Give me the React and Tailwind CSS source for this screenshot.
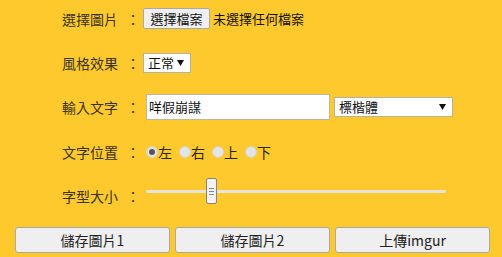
function Label({ children, className = "" }) {
  return (
    <span className={"w-[81px] shrink-0 text-[14px] leading-[20px] text-[#3a3325] whitespace-nowrap " + className}>
      {children}
      <span className="ml-[8px]">：</span>
    </span>
  );
}

function Arrow() {
  return (
    <svg width="7" height="6" viewBox="0 0 7 6" className="shrink-0">
      <path d="M0 0 H7 L3.5 6 Z" fill="#111" />
    </svg>
  );
}

function Radio({ checked, label }) {
  return (
    <label className="flex items-center mr-[7px]">
      <span className="w-[12px] h-[12px] rounded-full border border-[#d8d2c0] bg-[#e4e4e4] flex items-center justify-center">
        {checked && <span className="w-[6px] h-[6px] rounded-full bg-[#555]" />}
      </span>
      <span className="text-[14px] leading-[16px] text-[#2a2418]">{label}</span>
    </label>
  );
}

export default function App() {
  const btn =
    "w-[155px] h-[26px] shrink-0 rounded-[3px] border border-[#a9a9a9] bg-[#efefef] text-[14px] leading-[20px] text-[#222] flex items-center justify-center";

  return (
    <div
      className="w-[502px] h-[257px] bg-[#fec92c] overflow-hidden"
      style={{ fontFamily: '"Noto Sans CJK TC", "Noto Sans", sans-serif' }}
    >
      <div className="pl-[62px]">
        {/* 選擇圖片 */}
        <div className="flex items-center h-[21px] mt-[8px]">
          <Label>選擇圖片</Label>
          <button className="h-[21px] w-[67px] rounded-[2px] border border-[#a8a8a8] bg-[#efefef] text-[13px] text-[#111] flex items-center justify-center">
            選擇檔案
          </button>
          <span className="ml-[3px] text-[13px] text-[#111]">未選擇任何檔案</span>
        </div>

        {/* 風格效果 */}
        <div className="flex items-center h-[20px] mt-[24px]">
          <Label>風格效果</Label>
          <div className="h-[20px] w-[48px] bg-white border border-[#b8b0a0] flex items-center pl-[4px] pr-[6px] justify-between">
            <span className="text-[13px] text-[#111]">正常</span>
            <Arrow />
          </div>
        </div>

        {/* 輸入文字 */}
        <div className="flex items-center h-[26px] mt-[21px]">
          <Label>輸入文字</Label>
          <div className="ml-[3px] h-[26px] w-[184px] bg-white border border-[#bfb6a0] flex items-center pl-[2px]">
            <span className="text-[13px] text-[#111]">咩假崩謀</span>
          </div>
          <div className="ml-[4px] h-[20px] w-[119px] bg-white border border-[#b8b0a0] flex items-center pl-[4px] pr-[6px] justify-between">
            <span className="text-[13px] text-[#111]">標楷體</span>
            <Arrow />
          </div>
        </div>

        {/* 文字位置 */}
        <div className="flex items-center h-[20px] mt-[22px]">
          <Label>文字位置</Label>
          <div className="flex items-center ml-[3px]">
            <Radio checked label="左" />
            <Radio label="右" />
            <Radio label="上" />
            <Radio label="下" />
          </div>
        </div>

        {/* 字型大小 */}
        <div className="flex items-start h-[28px] mt-[16px]">
          <Label className="mt-[8px]">字型大小</Label>
          <div className="ml-[3px] relative w-[300px] h-[26px] flex items-center">
            <div className="w-full h-[3px] rounded-full bg-[#e6e3dc]" />
            <div className="absolute left-[60px] top-0 w-[11px] h-[26px] rounded-[2px] border border-[#8a8578] bg-[#f2f2f2] flex flex-col items-center justify-center gap-[2px]">
              <span className="w-[5px] h-px bg-[#888]" />
              <span className="w-[5px] h-px bg-[#888]" />
              <span className="w-[5px] h-px bg-[#888]" />
            </div>
          </div>
        </div>
      </div>

      {/* buttons */}
      <div className="flex gap-[5px] pl-[15px] mt-[21px]">
        <button className={btn}>儲存圖片1</button>
        <button className={btn}>儲存圖片2</button>
        <button className={btn}>上傳imgur</button>
      </div>
    </div>
  );
}
